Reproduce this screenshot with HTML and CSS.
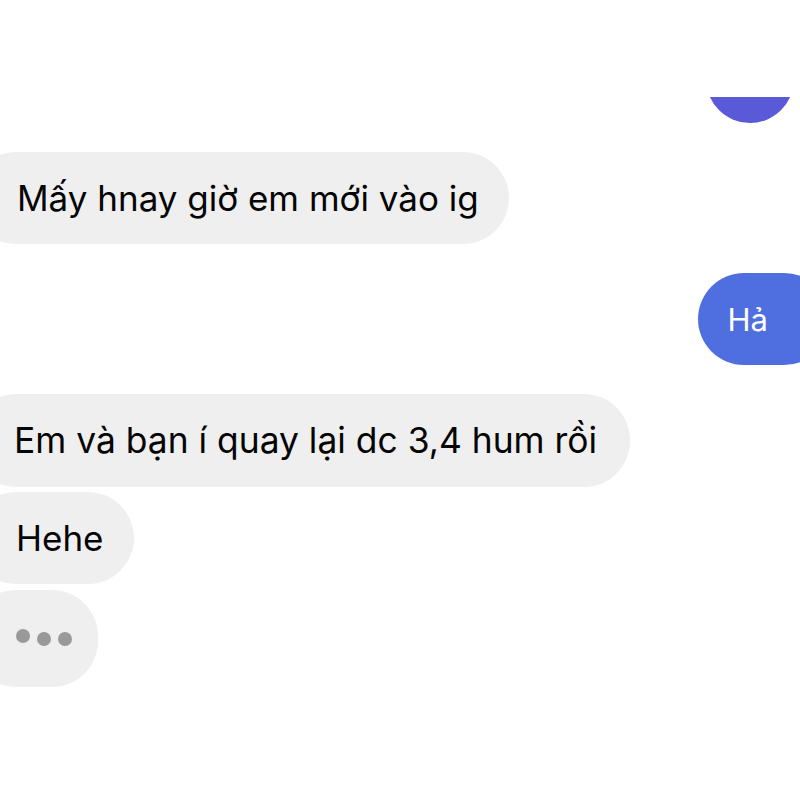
FILE: index.html
```html
<!DOCTYPE html>
<html lang="vi">
<head>
<meta charset="utf-8">
<link rel="stylesheet" href="styles.css">
</head>
<body>
<div class="chat">
  <div class="clip"><div class="out-partial"></div></div>
  <div class="bubble in b1">Mấy hnay giờ em mới vào ig</div>
  <div class="bubble out b-ha">Hả</div>
  <div class="bubble in b2">Em và bạn í quay lại dc 3,4 hum rồi</div>
  <div class="bubble in b3">Hehe</div>
  <div class="bubble in typing">
    <span class="dot d1"></span><span class="dot d2"></span><span class="dot d3"></span>
  </div>
</div>
</body>
</html>
```
FILE: styles.css
```css
html, body {
  margin: 0;
  padding: 0;
  background: #ffffff;
}
body {
  width: 800px;
  height: 800px;
  overflow: hidden;
  font-family: Inter, "Liberation Sans", Arial, sans-serif;
}
.chat {
  display: flex;
  flex-direction: column;
  padding-top: 97px;
  width: 800px;
  overflow: hidden;
}
.clip {
  align-self: flex-end;
  margin-right: 6px;
  height: 26px;
  overflow: hidden;
}
.out-partial {
  width: 88px;
  height: 92px;
  margin-top: -66px;
  border-radius: 46px;
  background: #5a5ad8;
}
.bubble {
  display: flex;
  align-items: center;
  box-sizing: border-box;
  height: 92px;
  border-radius: 46px;
  font-size: 35px;
  color: #050505;
  white-space: nowrap;
}
.in {
  align-self: flex-start;
  background: #efefef;
  margin-left: -30px;
  padding-left: 47px;
  padding-right: 30px;
}
.b1 { margin-top: 29px; }
.b-ha {
  align-self: flex-end;
  margin-top: 29px;
  margin-right: -30px;
  padding-left: 30px;
  padding-right: 62px;
  background: #4f6fe0;
  color: #ffffff;
  font-size: 31px;
}
.b2 { margin-top: 29px; padding-left: 44px; height: 93px; font-size: 35.4px; padding-right: 33px; }
.b3 { margin-top: 5px; padding-left: 46px; }
.typing {
  margin-top: 6px;
  height: 97px;
  width: 128px;
  padding-left: 46px;
  gap: 7px;
}
.dot {
  flex: none;
  width: 14px;
  height: 14px;
  border-radius: 50%;
  background: #999999;
}
.d1 { transform: translateY(-3px); }
```
